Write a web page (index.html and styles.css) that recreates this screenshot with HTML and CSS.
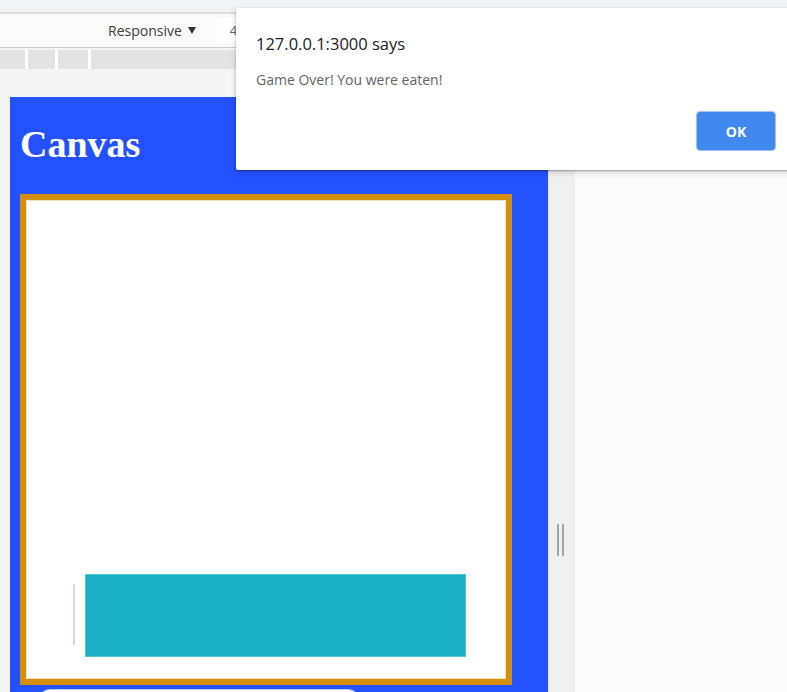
FILE: index.html
```html
<!DOCTYPE html>
<html lang="en">
<head>
<meta charset="utf-8">
<title>Canvas</title>
<link rel="stylesheet" href="styles.css">
</head>
<body>
<div class="browser">
  <div class="tabstrip"></div>
  <div class="toolbar">
    <span class="device-select">Responsive<span class="caret"></span></span>
    <span class="dim-input">400</span>
  </div>
  <div class="toolbar-gap"></div>
  <div class="mq-bar">
    <span class="mq mq-s"></span>
    <span class="mq mq-m"></span>
    <span class="mq mq-l"></span>
    <span class="mq mq-rest"></span>
  </div>
  <div class="workspace">
    <div class="device-area">
      <div class="panel">
        <h1 class="title">Canvas</h1>
        <div class="game-canvas">
          <span class="sprite-line"></span>
          <span class="sprite-block"></span>
        </div>
        <div class="pill"></div>
      </div>
    </div>
    <div class="resize-band">
      <div class="handle"><span></span><span></span></div>
    </div>
    <div class="outside"></div>
  </div>
</div>

<div class="dialog" role="alertdialog">
  <div class="dialog-title">127.0.0.1:3000 says</div>
  <div class="dialog-msg">Game Over! You were eaten!</div>
  <div class="dialog-actions">
    <button class="ok-btn">OK</button>
  </div>
</div>
</body>
</html>
```

FILE: styles.css
```css
* { box-sizing: border-box; }

html, body {
  margin: 0;
  padding: 0;
  width: 787px;
  height: 692px;
  overflow: hidden;
}

body {
  font-family: "Open Sans", "Noto Sans", sans-serif;
  background: #f4f4f4;
}

.browser {
  display: flex;
  flex-direction: column;
  height: 692px;
}

.tabstrip {
  height: 14px;
  background: #f1f3f4;
  border-bottom: 2px solid #dcdcdc;
  flex: none;
}

.toolbar {
  height: 34px;
  background: #fafafa;
  border-bottom: 1px solid #cbcbcb;
  display: flex;
  align-items: center;
  padding-left: 108px;
  flex: none;
}

.device-select {
  font-size: 14px;
  color: #3c3c3c;
  display: flex;
  align-items: center;
  line-height: 20px;
}

.caret {
  display: inline-block;
  margin-left: 6px;
  width: 0;
  height: 0;
  border-left: 4px solid transparent;
  border-right: 4px solid transparent;
  border-top: 7px solid #333;
}

.dim-input {
  margin-left: 21px;
  width: 60px;
  height: 25px;
  background: #fff;
  font-size: 13px;
  color: #666;
  padding-left: 13px;
  line-height: 25px;
}

.toolbar-gap {
  height: 2px;
  background: #f5f5f5;
  flex: none;
}

.mq-bar {
  height: 19px;
  display: flex;
  gap: 3px;
  background: #ffffff;
  flex: none;
}

.mq { background: #e3e3e3; height: 100%; }
.mq-s { width: 25px; }
.mq-m { width: 27px; }
.mq-l { width: 30px; }
.mq-rest { flex: 1; }

.workspace {
  flex: 1;
  display: flex;
  overflow: hidden;
  min-height: 0;
}

.device-area {
  width: 548px;
  flex: none;
  background: #f4f4f4;
  padding: 28px 0 0 10px;
}

.panel {
  background: #2351fd;
  height: 100%;
  padding: 25px 0 0 10px;
}

.title {
  margin: 0 0 28px 0;
  font-family: "Liberation Serif", "Times New Roman", serif;
  font-weight: bold;
  font-size: 38px;
  line-height: 44px;
  color: #ffffff;
}

.game-canvas {
  position: relative;
  width: 492px;
  height: 491px;
  border: 6px solid #d4900a;
  background: #ffffff;
  box-shadow: inset 0 0 0 1px #f3e2c0;
}

.sprite-line {
  position: absolute;
  left: 47px;
  top: 384px;
  width: 2px;
  height: 61px;
  background: #ddd2f2;
}

.sprite-block {
  position: absolute;
  left: 59px;
  top: 374px;
  width: 381px;
  height: 83px;
  background: #18aec4;
  border: 1px solid #52c6d6;
}

.pill {
  margin: 4px 0 0 18px;
  width: 322px;
  height: 30px;
  background: #ffffff;
  border: 1px solid #c9c9ef;
  border-radius: 12px;
}

.resize-band {
  width: 27px;
  flex: none;
  background: #efefef;
  border-left: 1px solid #e6e6e6;
  padding-top: 455px;
  display: flex;
  justify-content: center;
}

.handle {
  display: flex;
  gap: 3px;
  height: 32px;
  margin-left: -4px;
}

.handle span {
  width: 2px;
  height: 100%;
  background: #a6a6a6;
}

.outside {
  flex: 1;
  background: #f9f9f9;
}

.dialog {
  position: absolute;
  left: 236px;
  top: 8px;
  width: 560px;
  height: 162px;
  background: #ffffff;
  border-radius: 2px;
  box-shadow: 0 1px 2px rgba(0,0,0,0.3), 0 2px 6px rgba(0,0,0,0.15);
  padding: 25px 20px 0 20px;
}

.dialog-title {
  font-size: 16.5px;
  line-height: 22px;
  color: #202124;
}

.dialog-msg {
  margin-top: 15px;
  font-size: 14px;
  line-height: 20px;
  color: #5f6368;
}

.dialog-actions {
  margin-top: 21px;
  display: flex;
  justify-content: flex-end;
}

.ok-btn {
  width: 80px;
  height: 40px;
  border: 1px solid #9ec2f5;
  border-radius: 4px;
  background: #4088ee;
  color: #ffffff;
  font-family: "Open Sans", "Noto Sans", sans-serif;
  font-weight: bold;
  font-size: 14px;
  padding: 0;
}
```
